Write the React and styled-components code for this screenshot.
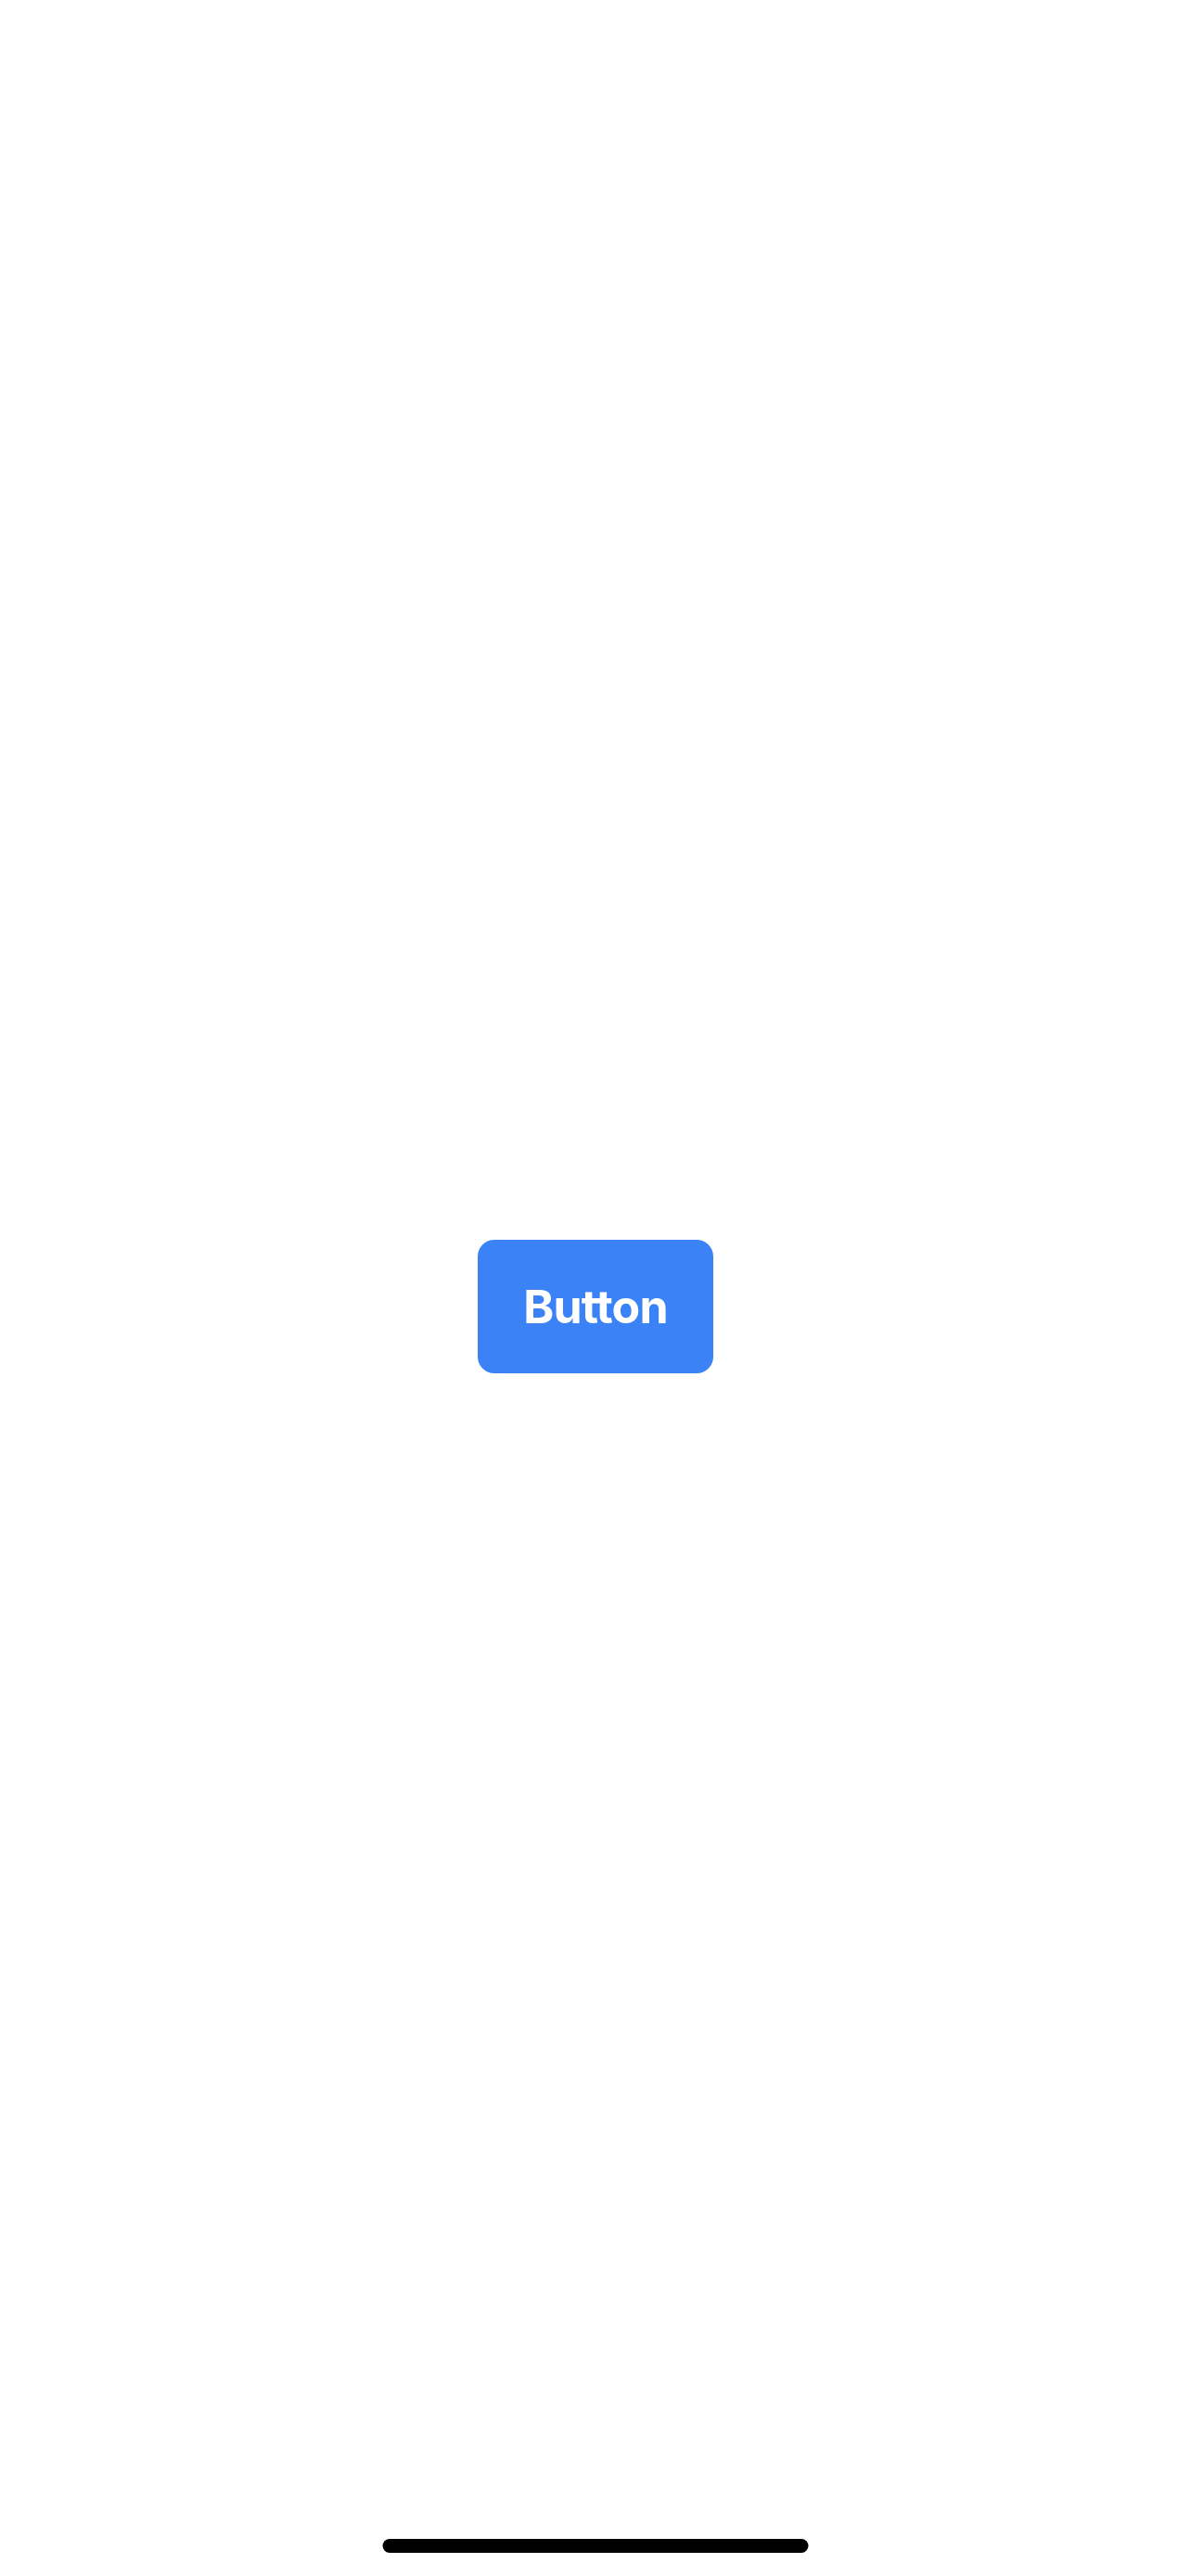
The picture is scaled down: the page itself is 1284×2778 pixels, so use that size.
import React from 'react';
import styled, { createGlobalStyle } from 'styled-components';

const GlobalStyle = createGlobalStyle`
  html, body {
    margin: 0;
    padding: 0;
    background: #ffffff;
  }
  body {
    font-family: Inter, "Noto Sans", "Liberation Sans", sans-serif;
  }
`;

const Screen = styled.div`
  position: relative;
  min-height: 100vh;
  display: flex;
  align-items: center;
  justify-content: center;
  padding-top: 40px;
  box-sizing: border-box;
  background: #ffffff;
`;

const Button = styled.button`
  height: 144px;
  width: 254px;
  padding: 0;
  border: none;
  border-radius: 18px;
  background-color: #3b82f6;
  color: #ffffff;
  font-family: Inter, "Noto Sans", sans-serif;
  font-size: 50px;
  font-weight: 700;
  letter-spacing: -0.8px;
  cursor: pointer;
`;

const HomeIndicator = styled.div`
  position: absolute;
  left: 50%;
  bottom: 25px;
  transform: translateX(-50%);
  width: 459px;
  height: 15px;
  border-radius: 8px;
  background: #000000;
`;

const App = () => {
  return (
    <>
      <GlobalStyle />
      <Screen>
        <Button>Button</Button>
        <HomeIndicator />
      </Screen>
    </>
  );
};

export default App;
